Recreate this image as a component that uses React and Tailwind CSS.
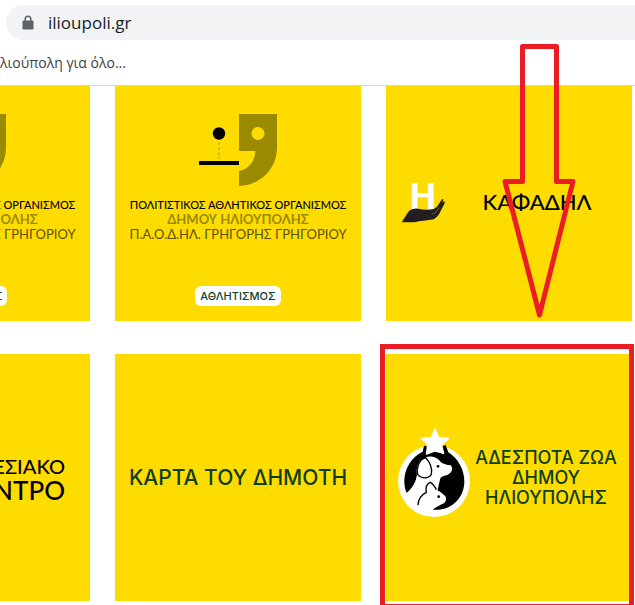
import React from 'react';

const LockIcon = () => (
  <svg className="w-3 h-4 shrink-0" viewBox="0 0 12 16" aria-hidden="true">
    <path d="M3.200 7V4A2.800 2.800 0 0 1 8.800 4V7" fill="none" stroke="#5f6368" strokeWidth="1.500" />
    <rect x="0.500" y="5.500" width="11" height="9" rx="1.200" fill="#5f6368" />
  </svg>
);

const CommaLogo = () => (
  <svg className="w-20 h-[74px] shrink-0" viewBox="0 0 80 74" aria-hidden="true">
    <circle cx="21" cy="20.5" r="6.2" fill="#000" />
    <path d="M21 29V46" stroke="#b39d00" strokeWidth="1" strokeDasharray="3 2" />
    <path d="M1 48H41V52H1Z" fill="#000" />
    <path
      fillRule="evenodd"
      fill="#998a00"
      d="M41 1H79V34C79 56 63 72 41 73V58C51 56 57 48 57.500 38H41ZM60 14A6.500 6.500 0 1 0 60 27A6.500 6.500 0 1 0 60 14Z"
    />
  </svg>
);

const HandLogo = () => (
  <svg className="w-[45px] h-[45px] shrink-0" viewBox="0 0 135 135" aria-hidden="true">
    <text
      x="66"
      y="90"
      textAnchor="middle"
      fontFamily="Roboto, sans-serif"
      fontWeight="700"
      fontSize="112"
      fill="#fff"
    >
      H
    </text>
    <path
      fill="#231f20"
      d="M2 130L22 98Q34 87 52 89Q66 93 84 92L98 90Q108 86 113 76L123 61Q127 58 127 63L124 72L129 67Q133 67 131 73L119 96Q112 113 98 121Q84 124 68 125Q54 125 40 130Z"
    />
    <path d="M92 105Q100 104 106 98L114 86" fill="none" stroke="#ffdc00" strokeWidth="1" />
  </svg>
);

const AnimalsLogo = () => (
  <svg className="mb-3 w-[75px] h-[92px] shrink-0" viewBox="20 15 225 276" aria-hidden="true">
    <circle cx="131" cy="180" r="108" fill="#fff" />
    <path
      fill="#000"
      d="M101 74L97 92C64 108 42 142 42 180C42 194 44 205 49 216C66 202 77 184 80 162L150 172L128 266C184 272 222 228 222 182C222 144 202 112 174 94L166 72L156 76L160 98L133 92L108 102L109 76Z"
    />
    <path
      fill="#fff"
      d="M104 110C122 102 142 110 150 122C158 129 170 131 181 133Q187 138 185 146Q182 160 162 164Q148 168 138 190L138 206C150 212 158 218 165 226Q171 236 162 246Q148 252 130 263L120 276L70 260L44 222C66 202 77 184 80 164C76 136 84 118 104 110Z"
    />
    <path
      d="M106 110C84 116 78 144 82 160C94 174 114 174 123 160C127 142 118 122 106 110Z"
      fill="#fff"
      stroke="#000"
      strokeWidth="4"
    />
    <path
      d="M83 253C83 234 92 222 108 214C105 198 110 188 120 184C128 188 133 196 138 206"
      fill="none"
      stroke="#000"
      strokeWidth="4"
    />
    <circle cx="143" cy="136" r="4" fill="#000" />
    <circle cx="145" cy="227" r="4" fill="#000" />
    <path
      d="M134 25L144 50L173 53L152 71L159 97L134 83L109 97L116 71L94 53L124 50Z"
      fill="#fff"
      stroke="#fff"
      strokeWidth="6"
      strokeLinejoin="round"
    />
  </svg>
);

const Card = ({ children, className = '' }) => (
  <a href="#" className={`flex h-[247px] bg-[#ffdc00] ${className}`}>
    {children}
  </a>
);

const OrganisationCard = ({ label }) => (
  <Card className="flex-col items-center pt-[39px] whitespace-nowrap">
    <CommaLogo />
    <div className="mt-[10px] flex flex-col items-center font-['Lato',sans-serif] text-[13px] leading-[15px]">
      <span className="text-[11px] leading-[15px] font-medium text-black">ΠΟΛΙΤΙΣΤΙΚΟΣ ΑΘΛΗΤΙΚΟΣ ΟΡΓΑΝΙΣΜΟΣ</span>
      <span className="font-bold text-[#998a00]">ΔΗΜΟΥ ΗΛΙΟΥΠΟΛΗΣ</span>
      <span className="text-[#5c5200]">Π.Α.Ο.Δ.ΗΛ. ΓΡΗΓΟΡΗΣ ΓΡΗΓΟΡΙΟΥ</span>
    </div>
    <span className="mt-11 rounded-md bg-white px-[5px] text-[11px] leading-5 font-medium text-[#0d3f2a]">{label}</span>
  </Card>
);

const App = () => {
  return (
    <div className="relative flex h-screen flex-col overflow-hidden bg-white font-['Inter',sans-serif]">
      <header className="shrink-0 border-b border-[#d5d7da] font-['Open_Sans',sans-serif]">
        <label className="mt-[5px] ml-[6px] flex h-[35px] items-center rounded-l-full bg-[#f1f3f4] pl-4">
          <LockIcon />
          <input
            type="text"
            aria-label="Address"
            defaultValue="ilioupoli.gr"
            className="ml-[14px] min-w-0 flex-1 bg-transparent text-[17px] text-[#202124] outline-none"
          />
        </label>
        <nav className="flex h-[45px] items-center">
          <a href="#" className="text-sm text-[#3c4043]">λιούπολη για όλο...</a>
        </nav>
      </header>

      <main className="min-h-0 flex-1 overflow-hidden">
        <div className="-mt-3 mr-[3px] -ml-[156px] grid grid-cols-3 gap-x-[25px] gap-y-[33px]">
          <OrganisationCard label="ΠΟΛΙΤΙΣΜΟΣ" />
          <OrganisationCard label="ΑΘΛΗΤΙΣΜΟΣ" />
          <Card className="items-center pr-9 pl-[15px] pt-2">
            <HandLogo />
            <span className="flex-1 pl-8 text-center font-['Lato',sans-serif] text-[22px] font-medium text-black">ΚΑΦΑΔΗΛ</span>
          </Card>

          <Card className="flex-col items-end justify-center pr-[25px] font-['Lato',sans-serif] font-medium text-black">
            <span className="text-xl leading-6">ΕΣΙΑΚΟ</span>
            <span className="text-[26px] leading-6">ΝΤΡΟ</span>
          </Card>
          <Card className="items-center justify-center text-[21px] font-medium text-[#0d3f1e]">
            ΚΑΡΤΑ ΤΟΥ ΔΗΜΟΤΗ
          </Card>
          <div className="relative">
            <Card className="items-center pr-3 pl-[11px]">
              <AnimalsLogo />
              <span className="flex flex-1 flex-col items-center text-lg leading-5 font-medium whitespace-nowrap text-[#0d3f1e]">
                <span>ΑΔΕΣΠΟΤΑ ΖΩΑ</span>
                <span>ΔΗΜΟΥ</span>
                <span>ΗΛΙΟΥΠΟΛΗΣ</span>
              </span>
            </Card>
            <div className="pointer-events-none absolute -top-[10px] -right-[2px] -bottom-2 -left-[6px] border-5 border-[#ea1c24]"></div>
          </div>
        </div>
      </main>

      <svg
        className="pointer-events-none absolute top-10 right-14 h-[285px] w-20"
        viewBox="0 0 80 285"
        fill="none"
        stroke="#ea1c24"
        strokeWidth="5"
        strokeLinejoin="round"
        aria-hidden="true"
      >
        <path d="M23.500 6.500H57.500V141.500H74L40.500 275L6 141.500H23.500Z" />
      </svg>
    </div>
  );
};

export default App;
